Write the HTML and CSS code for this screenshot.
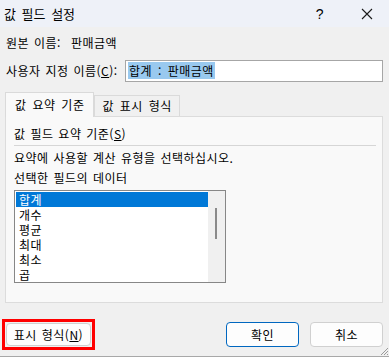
FILE: index.html
```html
<!DOCTYPE html>
<html lang="ko">
<head>
<meta charset="UTF-8">
<title>값 필드 설정</title>
<link rel="stylesheet" href="styles.css">
</head>
<body>
    <div class="dialog">
        <div class="titlebar">
            <span class="title">값 필드 설정</span>
            <span class="help">?</span>
            <span class="close">
                <svg width="12" height="12" viewBox="0 0 12 12"><path d="M1 1 L11 11 M11 1 L1 11" stroke="#1a1a1a" stroke-width="1.1" fill="none"/></svg>
            </span>
        </div>
        <div class="content">
            <div class="row source">원본 이름:<span class="value">판매금액</span></div>
            <div class="row custom">
                <label>사용자 지정 이름(<u>C</u>):</label>
                <div class="input"><span class="sel">합계 : 판매금액</span></div>
            </div>
            <div class="tabs">
                <div class="tab active">값 요약 기준</div>
                <div class="tab">값 표시 형식</div>
            </div>
            <div class="panel">
                <div class="group">값 필드 요약 기준(<u>S</u>)</div>
                <div class="line">요약에 사용할 계산 유형을 선택하십시오.</div>
                <div class="line">선택한 필드의 데이터</div>
                <div class="list">
                    <ul class="items">
                        <li class="on">합계</li>
                        <li>개수</li>
                        <li>평균</li>
                        <li>최대</li>
                        <li>최소</li>
                        <li>곱</li>
                    </ul>
                    <div class="scroll"><div class="thumb"></div></div>
                </div>
            </div>
            <div class="footer">
                <div class="mark">
                    <button class="btn">표시 형식(<u>N</u>)</button>
                </div>
                <div class="spacer"></div>
                <button class="btn primary">확인</button>
                <button class="btn">취소</button>
            </div>
        </div>
        <div class="grip">
            <svg width="9" height="9" viewBox="0 0 9 9"><path d="M8 1 L1 8 M8 4 L4 8 M8 7 L7 8" stroke="#9a9a9a" stroke-width="1" fill="none"/></svg>
        </div>
    </div>
    <div class="behind"></div>
</body>
</html>
```
FILE: styles.css
```css
* {
    margin: 0;
    padding: 0;
    box-sizing: border-box;
}
body {
    width: 389px;
    height: 359px;
    overflow: hidden;
    background: #fff;
    font-family: "Noto Sans CJK KR", "Liberation Sans", sans-serif;
    font-size: 12px;
    letter-spacing: 0.5px;
    word-spacing: 1px;
    color: #000;
}
u {
    text-decoration: underline;
    text-underline-offset: 1px;
}
.dialog {
    position: relative;
    height: 357px;
    background: #f0f0f0;
    border-bottom: 1px solid #a8a8a8;
}
.titlebar {
    height: 27px;
    display: flex;
    align-items: center;
    background: #eef1f8;
    padding-left: 4px;
}
.title {
    flex: 1;
    font-size: 13px;
    letter-spacing: 0;
    word-spacing: 2px;
}
.help {
    font-family: "Liberation Sans", sans-serif;
    font-size: 14px;
    margin-right: 37px;
}
.close {
    display: flex;
    margin-right: 16px;
}
.content {
    padding: 8px 6px 0 5px;
}
.row {
    line-height: 16px;
    padding-left: 1px;
}
.source .value {
    margin-left: 10px;
}
.custom {
    display: flex;
    align-items: center;
    margin-top: 9px;
    height: 22px;
}
.custom label {
    width: 119px;
}
.input {
    flex: 1;
    height: 22px;
    background: #fff;
    border: 1px solid #a6a6a6;
    padding: 2px 2px;
    line-height: 16px;
}
.sel {
    background: #99c9ef;
    padding: 0 1px;
    word-spacing: 2px;
}
.tabs {
    display: flex;
    align-items: flex-end;
    margin-top: 10px;
    height: 24px;
}
.tab {
    height: 21px;
    line-height: 19px;
    padding: 0 7px;
    border: 1px solid #dadada;
    border-bottom: none;
    background: #f0f0f0;
    word-spacing: 2px;
}
.tab.active {
    height: 25px;
    margin-bottom: -1px;
    padding: 2px 9px 0;
    background: #f9f9f9;
    position: relative;
    z-index: 1;
}
.panel {
    height: 187px;
    background: #f9f9f9;
    border: 1px solid #dcdcdc;
    padding: 9px 6px 0 8px;
}
.group {
    line-height: 16px;
    padding-bottom: 3px;
    border-bottom: 1px solid #d6d6d6;
    margin-bottom: 4px;
}
.line {
    line-height: 16px;
    margin-bottom: 4px;
}
.list {
    display: flex;
    width: 212px;
    height: 93px;
    background: #fff;
    border: 1px solid #878787;
    padding: 1px;
}
.items {
    list-style: none;
    flex: 1;
}
.items li {
    height: 15px;
    line-height: 15px;
    padding-left: 3px;
}
.items li.on {
    background: #0078d7;
    color: #fff;
}
.scroll {
    width: 17px;
    background: #f0f0f0;
    margin: -1px -1px -1px 0;
    padding: 17px 0 0 7px;
}
.thumb {
    width: 2px;
    height: 31px;
    background: #8a8a8a;
}
.footer {
    display: flex;
    align-items: center;
    gap: 11px;
    margin-top: 16px;
}
.spacer {
    flex: 1;
}
.btn {
    height: 25px;
    width: 73px;
    font-family: inherit;
    font-size: 12px;
    letter-spacing: 0.5px;
    word-spacing: 1px;
    color: #000;
    background: #fdfdfd;
    border: 1px solid #d0d0d0;
    border-radius: 4px;
}
.mark {
    margin-left: -3px;
    border: 3px solid #f00;
    padding: 1px;
    display: flex;
}
.mark .btn {
    width: 85px;
    height: 23px;
}
.btn.primary {
    border-color: #0067c0;
}
.grip {
    position: absolute;
    right: 0;
    bottom: 0;
    display: flex;
}
.behind {
    height: 2px;
    background: #fff;
}
```
